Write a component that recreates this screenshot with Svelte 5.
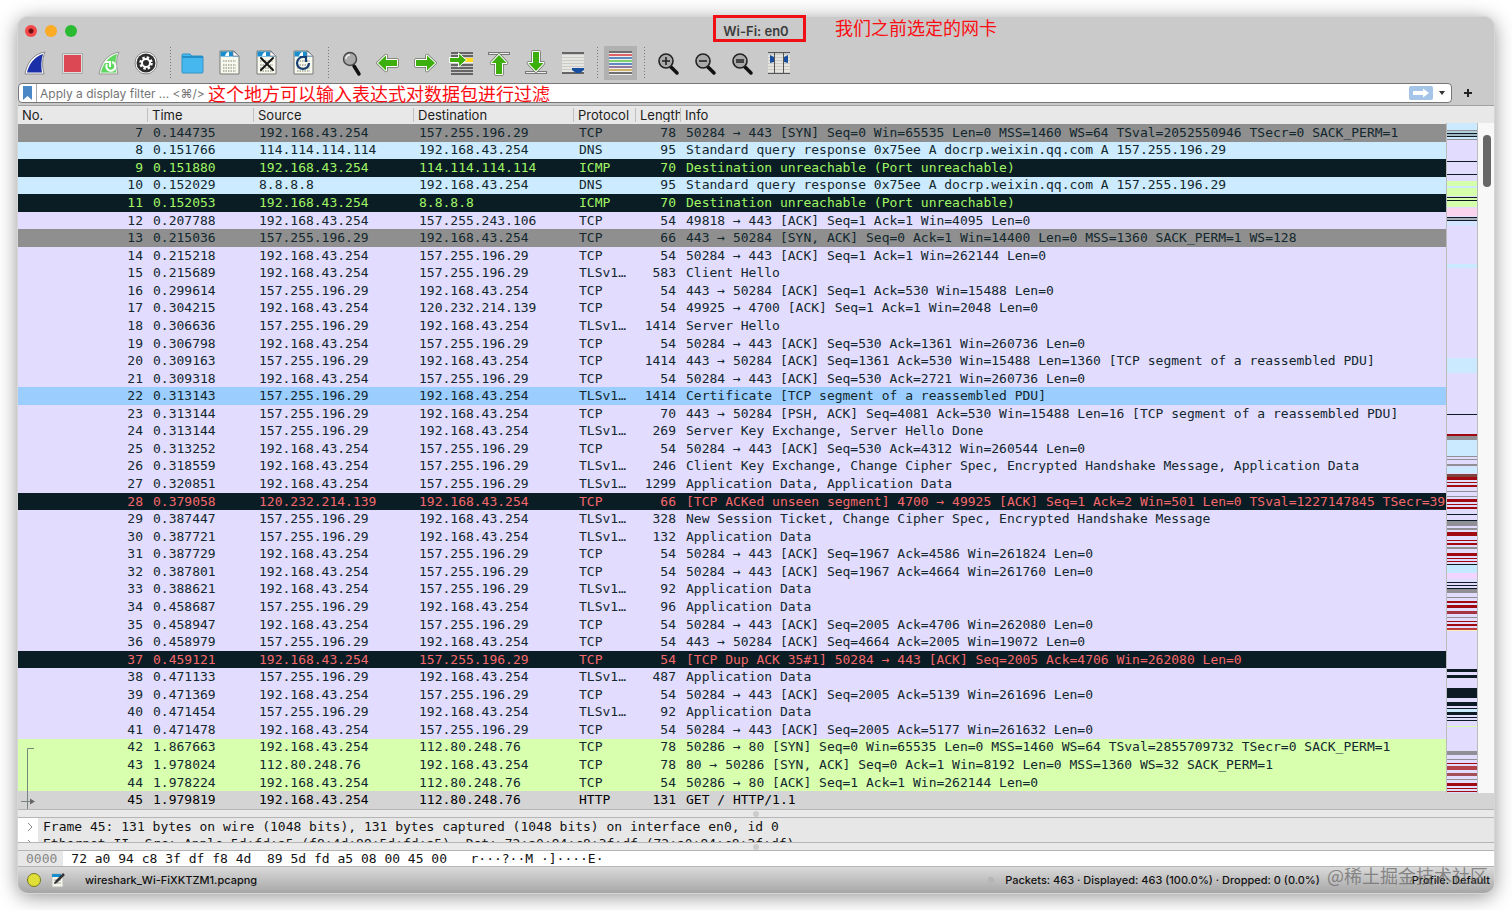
<script lang="ts">
type Kind = 'tcp' | 'syn' | 'dns' | 'icmp' | 'bad' | 'http' | 'hover' | 'selected';
type Packet = [no: number, time: string, src: string, dst: string, protocol: string, length: number, info: string, kind?: Kind];

const me = '192.168.43.254';
const wx = '157.255.196.29';
const web = '112.80.248.76';

const packets: Packet[] = [
	[7, '0.144735', me, wx, 'TCP', 78, '50284 → 443 [SYN] Seq=0 Win=65535 Len=0 MSS=1460 WS=64 TSval=2052550946 TSecr=0 SACK_PERM=1', 'syn'],
	[8, '0.151766', '114.114.114.114', me, 'DNS', 95, 'Standard query response 0x75ee A docrp.weixin.qq.com A 157.255.196.29', 'dns'],
	[9, '0.151880', me, '114.114.114.114', 'ICMP', 70, 'Destination unreachable (Port unreachable)', 'icmp'],
	[10, '0.152029', '8.8.8.8', me, 'DNS', 95, 'Standard query response 0x75ee A docrp.weixin.qq.com A 157.255.196.29', 'dns'],
	[11, '0.152053', me, '8.8.8.8', 'ICMP', 70, 'Destination unreachable (Port unreachable)', 'icmp'],
	[12, '0.207788', me, '157.255.243.106', 'TCP', 54, '49818 → 443 [ACK] Seq=1 Ack=1 Win=4095 Len=0'],
	[13, '0.215036', wx, me, 'TCP', 66, '443 → 50284 [SYN, ACK] Seq=0 Ack=1 Win=14400 Len=0 MSS=1360 SACK_PERM=1 WS=128', 'syn'],
	[14, '0.215218', me, wx, 'TCP', 54, '50284 → 443 [ACK] Seq=1 Ack=1 Win=262144 Len=0'],
	[15, '0.215689', me, wx, 'TLSv1…', 583, 'Client Hello'],
	[16, '0.299614', wx, me, 'TCP', 54, '443 → 50284 [ACK] Seq=1 Ack=530 Win=15488 Len=0'],
	[17, '0.304215', me, '120.232.214.139', 'TCP', 54, '49925 → 4700 [ACK] Seq=1 Ack=1 Win=2048 Len=0'],
	[18, '0.306636', wx, me, 'TLSv1…', 1414, 'Server Hello'],
	[19, '0.306798', me, wx, 'TCP', 54, '50284 → 443 [ACK] Seq=530 Ack=1361 Win=260736 Len=0'],
	[20, '0.309163', wx, me, 'TCP', 1414, '443 → 50284 [ACK] Seq=1361 Ack=530 Win=15488 Len=1360 [TCP segment of a reassembled PDU]'],
	[21, '0.309318', me, wx, 'TCP', 54, '50284 → 443 [ACK] Seq=530 Ack=2721 Win=260736 Len=0'],
	[22, '0.313143', wx, me, 'TLSv1…', 1414, 'Certificate [TCP segment of a reassembled PDU]', 'hover'],
	[23, '0.313144', wx, me, 'TCP', 70, '443 → 50284 [PSH, ACK] Seq=4081 Ack=530 Win=15488 Len=16 [TCP segment of a reassembled PDU]'],
	[24, '0.313144', wx, me, 'TLSv1…', 269, 'Server Key Exchange, Server Hello Done'],
	[25, '0.313252', me, wx, 'TCP', 54, '50284 → 443 [ACK] Seq=530 Ack=4312 Win=260544 Len=0'],
	[26, '0.318559', me, wx, 'TLSv1…', 246, 'Client Key Exchange, Change Cipher Spec, Encrypted Handshake Message, Application Data'],
	[27, '0.320851', me, wx, 'TLSv1…', 1299, 'Application Data, Application Data'],
	[28, '0.379058', '120.232.214.139', me, 'TCP', 66, '[TCP ACKed unseen segment] 4700 → 49925 [ACK] Seq=1 Ack=2 Win=501 Len=0 TSval=1227147845 TSecr=392126', 'bad'],
	[29, '0.387447', wx, me, 'TLSv1…', 328, 'New Session Ticket, Change Cipher Spec, Encrypted Handshake Message'],
	[30, '0.387721', wx, me, 'TLSv1…', 132, 'Application Data'],
	[31, '0.387729', me, wx, 'TCP', 54, '50284 → 443 [ACK] Seq=1967 Ack=4586 Win=261824 Len=0'],
	[32, '0.387801', me, wx, 'TCP', 54, '50284 → 443 [ACK] Seq=1967 Ack=4664 Win=261760 Len=0'],
	[33, '0.388621', me, wx, 'TLSv1…', 92, 'Application Data'],
	[34, '0.458687', wx, me, 'TLSv1…', 96, 'Application Data'],
	[35, '0.458947', me, wx, 'TCP', 54, '50284 → 443 [ACK] Seq=2005 Ack=4706 Win=262080 Len=0'],
	[36, '0.458979', wx, me, 'TCP', 54, '443 → 50284 [ACK] Seq=4664 Ack=2005 Win=19072 Len=0'],
	[37, '0.459121', me, wx, 'TCP', 54, '[TCP Dup ACK 35#1] 50284 → 443 [ACK] Seq=2005 Ack=4706 Win=262080 Len=0', 'bad'],
	[38, '0.471133', wx, me, 'TLSv1…', 487, 'Application Data'],
	[39, '0.471369', me, wx, 'TCP', 54, '50284 → 443 [ACK] Seq=2005 Ack=5139 Win=261696 Len=0'],
	[40, '0.471454', wx, me, 'TLSv1…', 92, 'Application Data'],
	[41, '0.471478', me, wx, 'TCP', 54, '50284 → 443 [ACK] Seq=2005 Ack=5177 Win=261632 Len=0'],
	[42, '1.867663', me, web, 'TCP', 78, '50286 → 80 [SYN] Seq=0 Win=65535 Len=0 MSS=1460 WS=64 TSval=2855709732 TSecr=0 SACK_PERM=1', 'http'],
	[43, '1.978024', web, me, 'TCP', 78, '80 → 50286 [SYN, ACK] Seq=0 Ack=1 Win=8192 Len=0 MSS=1360 WS=32 SACK_PERM=1', 'http'],
	[44, '1.978224', me, web, 'TCP', 54, '50286 → 80 [ACK] Seq=1 Ack=1 Win=262144 Len=0', 'http'],
	[45, '1.979819', me, web, 'HTTP', 131, 'GET / HTTP/1.1', 'selected']
];

const columns = ['No.', 'Time', 'Source', 'Destination', 'Protocol', 'Length', 'Info'];

// minimap stripes: [top, height, colour]
const K = '#0d1c24';
const G = '#8f8f95';
const R = '#a00812';
const B = '#cceaff';
const stripes: [number, number, string][] = [
	[0, 7, B], [7, 1, G], [8, 2, '#b4cfdc'], [10, 1, K], [11, 2, '#a3bac4'], [13, 1, K], [14, 2, B], [16, 1, G],
	[38, 1, K], [51, 1, K], [58, 15, '#d6ffac'], [63, 2, B], [74, 1, K], [75, 2, '#d6ffac'], [77, 1, K], [78, 6, '#d6ffac'],
	[85, 8, '#fbd5f0'], [94, 1, K], [95, 2, '#a9aebb'], [97, 1, K], [98, 5, '#d4e5ff'],
	[141, 4, B], [235, 15, B], [291, 1, K], [311, 2, R], [313, 4, G], [317, 16, B],
	[333, 1, G], [336, 1, G], [341, 2, G], [344, 6, B], [351, 3, '#804340'], [354, 3, R], [359, 1, R], [362, 2, R],
	[368, 1, G], [373, 1, G], [376, 3, R], [381, 1, R], [384, 2, R], [391, 1, K], [397, 1, K], [398, 5, G], [405, 2, G],
	[409, 4, R], [417, 1, R], [420, 2, R], [424, 2, G], [430, 3, R], [435, 1, R], [438, 1, R], [441, 1, K],
	[442, 8, '#c5eaff'], [450, 5, '#f4d5ff'], [459, 1, K], [462, 1, K], [465, 1, K], [466, 4, G], [474, 1, G],
	[478, 2, R], [482, 3, R], [488, 3, '#a53342'], [494, 1, G], [498, 1, R], [501, 2, R], [505, 2, '#c03a36'], [507, 1, '#ffefb8'],
	[546, 3, K], [552, 3, K], [565, 10, K], [579, 4, K], [585, 1, K], [586, 3, B], [589, 3, K], [594, 1, K], [597, 1, K],
	[603, 1, '#d6ffac'], [628, 4, G], [636, 1, G], [640, 1, R], [643, 4, '#b4404a'], [650, 3, '#a55058'], [656, 1, G],
	[660, 3, R], [665, 1, R], [668, 1, R]
];

const tools = [
	'Start capture', 'Stop capture', 'Restart capture', 'Capture options', '|',
	'Open file', 'Save file', 'Close file', 'Reload file', '|',
	'Find packet', 'Go back', 'Go forward', 'Go to packet', 'First packet', 'Last packet', 'Auto scroll', '|',
	'Colorize', '|',
	'Zoom in', 'Zoom out', 'Normal size', 'Resize columns'
];

let filter = $state('');
</script>

{#snippet doc()}
	<path d="M7 5h14l5 5v18H7z" fill="#f7f8ee" stroke="#777b77" />
	<path d="M7.500 5.500h13l5 5h-18z" fill="#198cce" />
	<path d="M20 5v5h6z" fill="#fff" stroke="#778" stroke-width=".7" />
	<path d="M12 10q1-4 4-4v4z" fill="#fff" />
	<path d="M10 15h13M10 19h13M10 22h13M10 25h13" stroke="#a6a797" stroke-width="1.600" stroke-dasharray="1.500 1" />
{/snippet}

{#snippet lens(mark: string)}
	<path d="M21 21l6 6" stroke="#111" stroke-width="3.500" stroke-linecap="round" />
	<circle cx="16" cy="15" r="7" fill="#aaa" stroke="#222" stroke-width="1.600" />
	<path d={mark} stroke="#222" stroke-width="1.600" fill="none" />
{/snippet}

{#snippet arrow(turn: number)}
	<g transform="rotate({turn} 17 17)">
		<path d="M7 17l8-7.500v4.500h11v6H15v4.500z" fill="#3caf0c" stroke="#69755f" stroke-width="3.500" stroke-linejoin="round" />
		<path d="M7 17l8-7.500v4.500h11v6H15v4.500z" fill="#3caf0c" stroke="#fff" stroke-width="2" stroke-linejoin="round" />
		<path d="M7 17l8-7.500v4.500h11v6H15v4.500z" fill="#3caf0c" />
	</g>
{/snippet}

<div class="desktop">
	<main class="window">
		<header class="titlebar">
			<div class="lights">
				<button class="light red" aria-label="Close"></button>
				<button class="light amber" aria-label="Minimize"></button>
				<button class="light green" aria-label="Zoom"></button>
			</div>
			<h1>Wi-Fi: en0</h1>
			<span class="mark-box"></span>
			<span class="note title-note">我们之前选定的网卡</span>
		</header>

		<nav class="toolbar">
			{#each tools as tool}
				{#if tool === '|'}
					<span class="sep"></span>
				{:else}
					<button class="tool" class:pressed={tool === 'Colorize'} aria-label={tool}>
						<svg width="33" height="34" viewBox="1 0 33 34">
							{#if tool === 'Start capture'}
								<path d="M7 28C9 17 15 8 27 6c-3 7-3 14-1 22z" fill="#fff" stroke="#888" />
								<path d="M9 26.500C11 18 16 11 25 8c-2 6-2 13-1 18.500z" fill="#1a2fa8" />
							{:else if tool === 'Stop capture'}
								<path d="M7.500 7.500h20v20h-20z" fill="#ddd" stroke="#aaa" />
								<path d="M9 9h17v17H9z" fill="#dc4853" />
							{:else if tool === 'Restart capture'}
								<path d="M7 28C9 17 15 8 27 6c-3 7-3 14-1 22z" fill="#e8f5e4" stroke="#999" />
								<path d="M9 26.500C11 18 16 11 25 8c-2 6-2 13-1 18.500z" fill="#5fd660" />
								<path d="M20 16a4.500 4.500 0 1 1-5 2M13 16h5v5" fill="none" stroke="#fff" stroke-width="2" />
							{:else if tool === 'Capture options'}
								<circle cx="17" cy="17" r="11" fill="#fff" stroke="#888" />
								<circle cx="17" cy="17" r="9.500" fill="#2d2d2d" />
								<circle cx="17" cy="17" r="5.500" fill="none" stroke="#fff" stroke-width="2.500" stroke-dasharray="2.400 1.920" />
								<circle cx="17" cy="17" r="4" fill="#2d2d2d" stroke="#fff" stroke-width="2" />
							{:else if tool === 'Open file'}
								<path d="M6 9q0-1 1-1h7l2 2h10q1 0 1 1v15q0 1-1 1H7q-1 0-1-1z" fill="#46b8ef" stroke="#3193c8" />
								<path d="M6 10h21v2H6z" fill="#248fc7" />
							{:else if tool === 'Save file'}
								{@render doc()}
							{:else if tool === 'Close file'}
								{@render doc()}
								<path d="M11 12l12 12M23 12L11 24" stroke="#151515" stroke-width="2" stroke-linecap="round" />
							{:else if tool === 'Reload file'}
								{@render doc()}
								<path d="M16 11a6 6 0 1 0 6 6M13 11h6v5" fill="none" stroke="#173f72" stroke-width="2.200" />
							{:else if tool === 'Find packet'}
								<path d="M20 20l5 8" stroke="#111" stroke-width="3.500" stroke-linecap="round" />
								<circle cx="16" cy="13" r="6.500" fill="#aaa" stroke="#444" stroke-width="1.400" />
								<path d="M12 13q0-4 4-4" stroke="#eee" stroke-width="1.500" fill="none" />
							{:else if tool === 'Go back'}
								{@render arrow(0)}
							{:else if tool === 'Go forward'}
								{@render arrow(180)}
							{:else if tool === 'Go to packet'}
								<path d="M6 7h22M6 10h22M6 19h22M6 22h22M6 25h22M6 28h22" stroke="#444" stroke-width="1.500" />
								<path d="M6 13h22M6 16h22" stroke="#eee" stroke-width="2" />
								<path d="M20 14h8" stroke="#ffdc20" stroke-width="4" />
								<path d="M4.500 11.500h9V7l8 7-8 7v-4.500h-9z" fill="#3caf0c" stroke="#fff" />
							{:else if tool === 'First packet'}
								<path d="M6 7.500h22" stroke="#777" stroke-width="3" /><path d="M7 7.500h20" stroke="#eee" />
								<g transform="translate(0 2)">{@render arrow(90)}</g>
							{:else if tool === 'Last packet'}
								<path d="M6 26.500h22" stroke="#777" stroke-width="3" /><path d="M7 26.500h20" stroke="#eee" />
								<g transform="translate(0 -2)">{@render arrow(270)}</g>
							{:else if tool === 'Auto scroll'}
								<path d="M6 7h22M6 27h22" stroke="#444" stroke-width="1.500" />
								<path d="M6 10h22M6 13h22M6 16h22M6 19h22M6 22h22M6 25h22" stroke="#f0f0e8" stroke-width="1.500" />
								<path d="M16 22h12v2l-4 3h-4l-4-3z" fill="#164f9f" />
							{:else if tool === 'Colorize'}
								<path d="M6 5h23v24H6z" fill="#eee" />
								{#each ['#444', '#d93438', '#3268ae', '#54c947', '#3268ae', '#765387', '#c49e38', '#444'] as colour, i}
									<path d="M6 {6 + i * 3}h23" stroke={colour} stroke-width="1.500" />
								{/each}
							{:else if tool === 'Zoom in'}
								{@render lens('M12 15h8M16 11v8')}
							{:else if tool === 'Zoom out'}
								{@render lens('M12 15h8')}
							{:else if tool === 'Normal size'}
								{@render lens('M12 14h8M12 16h8')}
							{:else}
								<path d="M7 10h22M7 13h22M7 16h22M7 19h22M7 22h22M7 25h22" stroke="#eeeee5" stroke-width="1.500" />
								<path d="M7 6.500h22M7 27.500h22M13.500 7v20M22.500 7v20" stroke="#555" fill="none" />
								<path d="M9 9l4 2v5l-4 1zM27 9l-4 2v5l4 1z" fill="#164f9f" />
							{/if}
						</svg>
					</button>
				{/if}
			{/each}
		</nav>

		<div class="filter-row">
			<div class="filter">
				<button class="bookmark" aria-label="Bookmarks">
					<svg width="9" height="14" viewBox="0 0 9 14"><path d="M0 0h9v14l-4.500-4L0 14z" fill="#4a87c7" /></svg>
				</button>
				<input bind:value={filter} aria-label="Display filter" placeholder="Apply a display filter ... <⌘/>" />
				<button class="apply" aria-label="Apply filter">
					<svg width="24" height="14" viewBox="0 0 24 14"><path d="M4 5h10V2.500L20 7l-6 4.500V9H4z" fill="#fff" /></svg>
				</button>
				<button class="recent" aria-label="Recent filters"><svg width="6" height="4" viewBox="0 0 6 4"><path d="M0 0h6L3 4z" fill="#333" /></svg></button>
				<span class="note filter-note">这个地方可以输入表达式对数据包进行过滤</span>
			</div>
			<button class="add" aria-label="Add filter button">
				<svg width="8" height="8" viewBox="0 0 8 8"><path d="M4 0v8M0 4h8" stroke="#222" stroke-width="2" /></svg>
			</button>
		</div>

		<section class="packet-list">
			<div class="rows">
				<table>
					<colgroup>
						<col class="c-no" /><col class="c-time" /><col class="c-addr" /><col class="c-addr" />
						<col class="c-proto" /><col class="c-len" /><col />
					</colgroup>
					<thead>
						<tr>
							{#each columns as column}
								<th><span>{column}</span></th>
							{/each}
						</tr>
					</thead>
					<tbody>
						{#each packets as [no, time, src, dst, protocol, length, info, kind]}
							<tr class={kind ?? 'tcp'}>
								<td class="num">{no}</td>
								<td>{time}</td>
								<td>{src}</td>
								<td>{dst}</td>
								<td>{protocol}</td>
								<td class="num">{length}</td>
								<td>{info}</td>
							</tr>
						{/each}
					</tbody>
				</table>
				<svg class="related" width="20" height="62" viewBox="0 0 20 62">
					<path d="M16 1.500H9.500V62M3 54.500h12" fill="none" stroke="#78857c" />
					<path d="M12 51.500l5 3-5 3z" fill="#666" />
				</svg>
			</div>
			<aside class="side">
				<div class="side-head"></div>
				<div class="side-body">
					<svg class="minimap" viewBox="0 0 32 670" preserveAspectRatio="none" shape-rendering="crispEdges">
						{#each stripes as [top, height, colour]}
							<rect x="0" y={top} width="32" {height} fill={colour} />
						{/each}
					</svg>
					<div class="scrollbar"><span class="thumb"></span></div>
				</div>
				<div class="side-foot"></div>
			</aside>
		</section>

		<div class="splitter"><i></i></div>

		<section class="details">
			{#each [
				'Frame 45: 131 bytes on wire (1048 bits), 131 bytes captured (1048 bits) on interface en0, id 0',
				'Ethernet II, Src: Apple_5d:fd:a5 (f8:4d:89:5d:fd:a5), Dst: 72:a0:94:c8:3f:df (72:a0:94:c8:3f:df)'
			] as line}
				<div class="detail">
					<span class="chevron">
						<svg width="6" height="8" viewBox="0 0 6 8"><path d="M1 0l4 4-4 4" fill="none" stroke="#888" /></svg>
					</span>
					<span>{line}</span>
				</div>
			{/each}
		</section>

		<div class="splitter"><i></i></div>

		<section class="bytes">
			<span class="offset">0000</span>
			<span class="hex">72 a0 94 c8 3f df f8 4d  89 5d fd a5 08 00 45 00   r···?··M ·]····E·</span>
		</section>

		<footer class="status">
			<button class="expert" aria-label="Expert information"></button>
			<button class="comment" aria-label="Edit capture comment">
				<svg width="15" height="16" viewBox="0 0 15 16">
					<path d="M1 2h11v13H1z" fill="#f5f5ec" stroke="#bbb" /><path d="M1 2h9v3H1z" fill="#198cce" />
					<path d="M3 8h7M3 11h7" stroke="#aaa" /><path d="M5 10l8-8" stroke="#333" stroke-width="2.500" /><path d="M3 12l1-3 2 2z" fill="#222" />
				</svg>
			</button>
			<span class="file">wireshark_Wi-FiXKTZM1.pcapng</span>
			<i class="grip"></i>
			<span class="counts">Packets: 463 · Displayed: 463 (100.0%) · Dropped: 0 (0.0%)</span>
			<span class="profile">Profile: Default</span>
			<span class="watermark">@稀土掘金技术社区</span>
		</footer>
	</main>
</div>

<style>
	:global(body) {
		margin: 0;
		background: #fff;
	}

	button {
		padding: 0;
		border: 0;
		background: none;
	}

	svg {
		display: block;
	}

	.desktop {
		box-sizing: border-box;
		height: 100vh;
		padding: 17px 18px;
		font-family: Inter, "Noto Sans CJK SC", sans-serif;
		font-size: 13px;
		color: #1c1c1c;
		overflow: hidden;
	}

	.window {
		position: relative;
		display: flex;
		flex-direction: column;
		height: 100%;
		border-radius: 10px;
		background: #cacaca;
		box-shadow: 0 0 0 1px #d6d6d6, 0 3px 20px rgba(0, 0, 0, 0.45);
	}

	/* title bar */
	.titlebar {
		position: relative;
		flex: none;
		display: flex;
		align-items: center;
		height: 28px;
		padding: 0 7px;
	}

	.lights {
		display: flex;
		gap: 8px;
	}

	.light {
		width: 12px;
		height: 12px;
		border-radius: 50%;
	}

	.red {
		background: radial-gradient(circle, #6b0d0d 2px, #f4494a 3px);
	}

	.amber {
		background: #fcab24;
	}

	.green {
		background: #2abb33;
	}

	h1 {
		flex: 1;
		margin: 0 52px 0 0;
		font-size: 13px;
		font-weight: 600;
		line-height: 16px;
		text-align: center;
		color: #3c3c3c;
	}

	.mark-box {
		position: absolute;
		top: -2px;
		left: calc(50% - 43px);
		box-sizing: border-box;
		width: 93px;
		height: 27px;
		border: 3px solid #f00f14;
	}

	.note {
		position: absolute;
		font-family: "Noto Sans CJK SC", sans-serif;
		font-size: 18px;
		line-height: 20px;
		color: #fb0d12;
		white-space: nowrap;
		pointer-events: none;
	}

	.title-note {
		top: 0;
		left: calc(50% + 79px);
	}

	/* toolbar */
	.toolbar {
		flex: none;
		display: flex;
		align-items: center;
		gap: 4px;
		height: 36px;
		padding-left: 1px;
	}

	.tool {
		width: 33px;
		height: 34px;
	}

	.pressed {
		background: #b1b1b1;
	}

	.sep {
		width: 6px;
		height: 32px;
		background: repeating-linear-gradient(#777 0 1px, transparent 1px 3px) center / 1px 100% no-repeat;
	}

	/* display filter */
	.filter-row {
		flex: none;
		display: flex;
		align-items: center;
		height: 24px;
		border-bottom: 1px solid #a2a2a2;
	}

	.filter {
		position: relative;
		flex: 1;
		display: flex;
		align-items: center;
		box-sizing: border-box;
		height: 20px;
		border: 1px solid #777;
		border-radius: 4px;
		background: #fff;
	}

	.bookmark {
		height: 18px;
		padding: 2px 4px;
		border-right: 1px solid #aaa;
	}

	input {
		flex: 1;
		min-width: 0;
		height: 18px;
		padding: 0 3px;
		border: 0;
		outline: 0;
		background: none;
		font: inherit;
		font-size: 12px;
	}

	input::placeholder {
		color: #747474;
	}

	.apply {
		border-radius: 2px;
		background: #a5c5e8;
	}

	.recent {
		padding: 6px;
	}

	.filter-note {
		top: -1px;
		left: 189px;
	}

	.add {
		width: 32px;
		height: 20px;
		margin-right: 10px;
		padding-left: 12px;
	}

	/* packet list */
	.packet-list {
		flex: 1;
		min-height: 0;
		display: flex;
		border-bottom: 1px solid #b5b5b5;
	}

	.rows {
		position: relative;
		flex: 1;
		min-width: 0;
		overflow: hidden;
		background: #d4d4d4;
	}

	table {
		width: 100%;
		height: 100%;
		table-layout: fixed;
		border-collapse: collapse;
	}

	.c-no {
		width: 130px;
	}

	.c-time {
		width: 106px;
	}

	.c-addr {
		width: 160px;
	}

	.c-proto {
		width: 62px;
	}

	.c-len {
		width: 45px;
	}

	thead tr {
		height: 18px;
		background: #e8e8e8;
	}

	th {
		height: 18px;
		padding: 0;
		font-weight: 400;
		line-height: 14px;
		text-align: left;
	}

	th span {
		display: block;
		padding-left: 4px;
		border-right: 1px solid #c0c0c0;
		overflow: hidden;
	}

	th:last-child span {
		border: 0;
	}

	td {
		padding: 0 0 0 5px;
		font-family: "DejaVu Sans Mono", monospace;
		font-size: 13px;
		line-height: 16px;
		white-space: pre;
		overflow: hidden;
	}

	.num {
		padding: 0 5px 0 0;
		text-align: right;
	}

	.tcp {
		background: #e2ddff;
		color: #12272e;
	}

	.syn {
		background: #8f8f8f;
		color: #12272e;
	}

	.dns {
		background: #ccebff;
		color: #12272e;
	}

	.icmp {
		background: #0a1c24;
		color: #a0f565;
	}

	.bad {
		background: #0a1c24;
		color: #f4696b;
	}

	.http {
		background: #d7ffae;
		color: #12272e;
	}

	.hover {
		background: #9bceff;
		color: #12272e;
	}

	.selected {
		background: #d4d4d4;
		color: #000;
	}

	.related {
		position: absolute;
		left: 0;
		bottom: 0;
	}

	.side {
		flex: none;
		display: flex;
		flex-direction: column;
		width: 48px;
	}

	.side-head {
		height: 17px;
		background: #e8e8e8;
	}

	.side-body {
		flex: 1;
		min-height: 0;
		display: flex;
	}

	.minimap {
		box-sizing: border-box;
		width: 33px;
		height: 100%;
		border: solid #bbb;
		border-width: 0 1px;
		background: #e2ddff;
	}

	.scrollbar {
		flex: 1;
		padding: 12px 3px;
		background: #f8f8f8;
	}

	.thumb {
		display: block;
		width: 8px;
		height: 52px;
		margin-left: 2px;
		border-radius: 4px;
		background: #676767;
	}

	.side-foot {
		height: 16px;
		background: #d4d4d4;
	}

	.splitter {
		flex: none;
		display: flex;
		align-items: center;
		justify-content: center;
		height: 7px;
		background: #e9e9e9;
	}

	.splitter i,
	.grip {
		width: 6px;
		height: 6px;
		border-radius: 50%;
		background: #ccc;
	}

	/* details and bytes */
	.details,
	.bytes {
		flex: none;
		border: solid #b5b5b5;
		border-width: 1px 0;
		font-family: "DejaVu Sans Mono", monospace;
		color: #111;
		overflow: hidden;
	}

	.details {
		height: 24px;
		background: #e7e7e7;
	}

	.detail {
		display: flex;
		gap: 5px;
		height: 17px;
		line-height: 17px;
		white-space: nowrap;
	}

	.chevron {
		display: flex;
		align-items: center;
		justify-content: flex-end;
		box-sizing: border-box;
		width: 20px;
		padding-right: 5px;
		background: #fff;
	}

	.bytes {
		display: flex;
		height: 15px;
		background: #fff;
		line-height: 15px;
	}

	.offset {
		padding: 0 6px 0 8px;
		background: #e7e7e7;
		color: #888;
	}

	.hex {
		padding-left: 8px;
		white-space: pre;
	}

	/* status bar */
	.status {
		position: relative;
		flex: none;
		display: flex;
		align-items: center;
		height: 26px;
		padding: 0 4px 0 9px;
		border-radius: 0 0 10px 10px;
		background: linear-gradient(#dadada, #a6a6a6);
		font-size: 11px;
		font-weight: 500;
		color: #111;
		white-space: nowrap;
	}

	.expert {
		width: 14px;
		height: 14px;
		border: 1px solid #777820;
		border-radius: 50%;
		background: #dfdf38;
	}

	.comment {
		margin-left: 10px;
	}

	.file {
		flex: 1;
		margin-left: 19px;
	}

	.grip {
		background: #b5b5b5;
	}

	.counts {
		margin-left: 11px;
	}

	.profile {
		margin-left: 92px;
	}

	.watermark {
		position: absolute;
		right: 6px;
		top: -2px;
		font-family: "Noto Sans CJK SC", sans-serif;
		font-size: 18px;
		font-weight: 400;
		line-height: 20px;
		color: rgba(100, 100, 100, 0.7);
		pointer-events: none;
	}
</style>
